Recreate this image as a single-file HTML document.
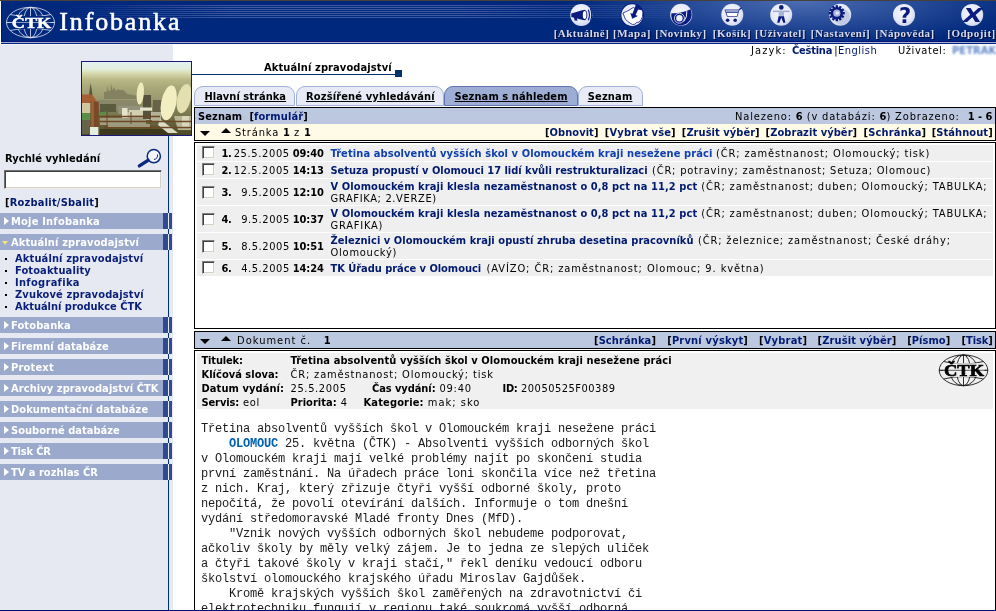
<!DOCTYPE html>
<html lang="cs">
<head>
<meta charset="utf-8">
<title>Infobanka ČTK</title>
<style>
html,body{margin:0;padding:0;}
body{width:996px;height:611px;overflow:hidden;position:relative;background:#fff;
 font-family:"DejaVu Sans Condensed","DejaVu Sans","Liberation Sans",sans-serif;font-size:11px;color:#000;}
.abs{position:absolute;}
.t{position:absolute;white-space:pre;line-height:13px;height:13px;font-size:11px;letter-spacing:calc(.92px + var(--d,0px));}
.b{font-weight:bold;letter-spacing:calc(.08px + var(--d,0px));}
b{font-weight:bold;letter-spacing:calc(.08px + var(--d,0px));}
.nv{color:#001a70;}
#topline{left:0;top:0;width:996px;height:1px;background:#46423a;}
#hdr{left:1px;top:1px;width:995px;height:41px;background:#00287c;overflow:hidden;}
#hdr .l1{position:absolute;left:0;top:40px;width:995px;height:1px;background:#00157a;}
#hb2{left:1px;top:42px;width:995px;height:1px;background:#a5b2d5;}
#hb3{left:1px;top:43px;width:995px;height:1px;background:#00207c;}
#side{left:0;top:44px;width:173px;height:566px;background:#e6e9f2;}
#sidetop{left:0;top:44px;width:173px;height:1px;background:#f5f6fa;}
#botline{left:0;top:610px;width:996px;height:1px;background:#00126e;}
#vline{left:168px;top:135px;width:1px;height:475px;background:#003070;}
#hline{left:192px;top:74px;width:204px;height:1px;background:#003070;}
#sq{left:395px;top:70px;width:7px;height:7px;background:#003366;}
.mi{position:absolute;left:0;width:173px;height:16px;}
.mi .m1{position:absolute;left:0;top:0;width:163px;height:16px;background:#9ba9cc;}
.mi .m5{position:absolute;left:4px;top:4px;width:0;height:0;border-left:5px solid #fff;border-top:4px solid transparent;border-bottom:4px solid transparent;}
.mi .m5.dn{left:2px;top:7px;border-top:4px solid #f3e27a;border-left:3.5px solid transparent;border-right:3.5px solid transparent;border-bottom:none;}
.mi .m2{position:absolute;left:163px;top:0;width:5px;height:16px;background:#2e4b94;}
.mi .m4{position:absolute;left:169px;top:0;width:3px;height:16px;background:#2e4b94;}
.mi .m3{position:absolute;left:168px;top:0;width:1px;height:16px;background:#e6e9f2;}
.w{color:#fff;}
.sub{color:#0a1f7a;}
.bul{position:absolute;left:5px;width:2px;height:2px;background:#000;}
.box{position:absolute;left:194px;width:800px;border:1px solid #000;background:#fff;}
.row{position:absolute;left:197px;width:796px;background:#efefef;}
.cb{position:absolute;left:202px;width:11px;height:11px;background:#fff;border:1px solid;border-color:#808080 #f4f2ec #f4f2ec #808080;box-shadow:inset 1px 1px 0 #404040,inset -1px -1px 0 #d4d0c8;}
.mono{position:absolute;left:201px;white-space:pre;font-family:"Liberation Mono","DejaVu Sans Mono",monospace;font-size:12px;line-height:15px;height:15px;letter-spacing:-.2px;color:#1a1a1a;}
.tab{position:absolute;top:86px;height:20px;box-sizing:border-box;border:1px solid #a3b2d8;border-radius:9px 9px 0 0;background:#e8ebf6;}
.tab.act{background:#9eadd4;border-color:#5f76b2;}
.u{text-decoration:underline;}
.hl{position:absolute;white-space:pre;font-family:"Liberation Serif",serif;font-weight:bold;font-size:11px;line-height:14px;color:#d6dae9;text-shadow:1px 1px 0 #000a3c;top:25px;letter-spacing:.5px;width:80px;text-align:center;}
.tri-d{position:absolute;width:0;height:0;border-top:5px solid #000;border-left:5px solid transparent;border-right:5px solid transparent;}
.tri-u{position:absolute;width:0;height:0;border-bottom:5px solid #000;border-left:5px solid transparent;border-right:5px solid transparent;}
</style>
</head>
<body>
<div id="pg" style="position:absolute;left:0;top:0;width:996px;height:611px;overflow:hidden;will-change:transform;">
<div class="abs" id="topline"></div>
<div class="abs" id="hdr">
<div class="abs" style="left:0;top:0;width:1px;height:41px;background:#001a80;"></div>
<div class="abs" style="left:60px;top:4px;width:935px;height:14px;background:repeating-linear-gradient(to bottom,#3c5aa2 0,#3c5aa2 1px,transparent 1px,transparent 2px);-webkit-mask-image:linear-gradient(to right,transparent 0,#000 170px,#000 400px,transparent 640px);mask-image:linear-gradient(to right,transparent 0,#000 170px,#000 400px,transparent 640px);"></div>
<div class="abs" style="left:0;top:0;width:995px;height:40px;background:radial-gradient(ellipse 230px 46px at 800px 0,rgba(96,126,192,.8),rgba(96,126,192,0) 100%);"></div>
<div class="l1"></div>
<svg class="abs" style="left:4px;top:5px" width="52" height="34" viewBox="0 0 52 34">
<g fill="none" stroke="#dfe5f3" stroke-width="0.8">
<ellipse cx="25.5" cy="16.5" rx="24" ry="15.2"/>
<ellipse cx="25.5" cy="16.5" rx="7" ry="15.2"/>
<ellipse cx="25.5" cy="16.5" rx="14" ry="15.2"/>
<path d="M25.5 1.3V31.7M1.5 16.5H49.5M5 8.5Q25.5 13 46 8.5M5 24.5Q25.5 20 46 24.5"/>
</g>
<rect x="6.5" y="10" width="39" height="13" fill="#00287c"/>
<path d="M1.5 16.5H49.5" stroke="#dfe5f3" stroke-width="0.6"/>
<text x="6.7" y="22" textLength="39.6" lengthAdjust="spacingAndGlyphs" font-family="Liberation Serif,serif" font-weight="bold" font-size="15.5" fill="#fff" stroke="#fff" stroke-width="0.45">ČTK</text>
</svg>
<div class="abs" id="ibk" style="left:58.3px;top:6px;font-family:'Liberation Serif',serif;font-size:26px;line-height:30px;color:#fff;letter-spacing:1.85px;white-space:pre;-webkit-text-stroke:0.55px #fff;">Infobanka</div>
<div class="hl" id="lb0" style="left:540.5px;">[Aktuálně]</div>
<div class="hl" id="lb1" style="left:591px;">[Mapa]</div>
<div class="hl" id="lb2" style="left:640px;">[Novinky]</div>
<div class="hl" id="lb3" style="left:691px;">[Košík]</div>
<div class="hl" id="lb4" style="left:739.5px;">[Uživatel]</div>
<div class="hl" id="lb5" style="left:799.5px;">[Nastavení]</div>
<div class="hl" id="lb6" style="left:864px;">[Nápověda]</div>
<div class="hl" id="lb7" style="left:930.5px;">[Odpojit]</div>
</div>
<svg class="abs" style="left:560px;top:0" width="436" height="30" viewBox="560 0 436 30">
<defs><radialGradient id="cg" cx="45%" cy="40%" r="60%"><stop offset="0" stop-color="#f6f7fd"/><stop offset="0.7" stop-color="#e6e9f7"/><stop offset="1" stop-color="#cfd6ec"/></radialGradient></defs>
<g fill="url(#cg)">
<circle cx="581.3" cy="15" r="11"/><circle cx="681.2" cy="14.7" r="11"/><circle cx="732.3" cy="14.7" r="11"/>
<circle cx="781.2" cy="14.7" r="11"/><circle cx="840.2" cy="14.7" r="11"/><circle cx="904" cy="14.9" r="11"/><circle cx="972.2" cy="14.9" r="11"/>
</g>
<!-- megaphone -->
<g fill="#0b1c80">
<path d="M571.3 13.6L582 10.2Q584.6 10 584.6 15Q584.6 20 582 19.8L576.8 18.6L577.6 20.8L574.6 20.4L574 17.8L571.3 17Z"/>
<ellipse cx="584.2" cy="15" rx="3.1" ry="5.3"/>
</g>
<ellipse cx="584.6" cy="15" rx="1.8" ry="4" fill="#fff"/>
<path d="M588.3 9.8Q590.6 15 588.3 20.2M590.4 8.4Q593 15 590.4 21.6" fill="none" stroke="#0b1c80" stroke-width="1.1"/>
<!-- map -->
<circle cx="632.2" cy="15.1" r="11.8" fill="#0b1c80"/><circle cx="632.2" cy="15.1" r="10.8" fill="#e8ebf8"/>
<path d="M622.9 13L626.8 11.3L630 9.6L632.2 8.1L633.7 7.6L636 9L639.1 9.3L642 9.8L642.8 12.3L642.5 16.7L641.1 19.6L639.1 22.1L636.7 22.3L635.2 24.1L632.7 24.5L630.8 23.6L627.8 21.6L625.4 19.1L624.4 16.7Z" fill="#fff" stroke="#0b1c80" stroke-width="0.8"/>
<path d="M635 4.6Q640 5.4 642.4 10L639.2 9.6L637 7Z" fill="#0b1c80"/>
<path d="M636 4.4L640 5.6L635.6 14.9L637.9 16L632.2 18.7L630.3 13L632.4 13.8Z" fill="#0b1c80"/>
<!-- horn -->
<path d="M671.4 13.2Q676 13.6 680.5 12.6Q686 11.4 690.6 9.2Q692.8 15 690.4 19.6Q687 25 681 25.4Q674.5 25 672 19.4Q670.8 16.4 671.4 13.2Z" fill="#0b1c80"/>
<circle cx="679.4" cy="18.2" r="5" fill="none" stroke="#f4f5fc" stroke-width="0.8"/><circle cx="679.4" cy="18.2" r="3.2" fill="#eceefa"/>
<path d="M683.6 21.6Q687.6 17 686.8 11.2" fill="none" stroke="#f4f5fc" stroke-width="1"/>
<!-- cart -->
<path d="M724.4 9.4H739.6L737.4 16.8H727Z" fill="#2a3a94"/>
<path d="M725.4 10.1H738.6L738 12.2H726Z" fill="#96a2cf"/>
<path d="M726.6 13H737.8L736.8 16H727.6Z" fill="#fff"/>
<path d="M739.2 9.8L741.6 7.8" stroke="#0b1c80" stroke-width="1.2"/>
<circle cx="727.6" cy="20.2" r="1.8" fill="#0b1c80"/><circle cx="735.2" cy="20.2" r="1.8" fill="#0b1c80"/>
<!-- user -->
<circle cx="781.3" cy="7.4" r="2.3" fill="#0b1c80"/>
<rect x="773" y="10.6" width="16.4" height="1.5" fill="#9eabd4"/>
<rect x="778.6" y="11.4" width="5.4" height="5" fill="#aab5da"/>
<path d="M778.6 16.2H784L785.4 22.8H783.2L781.3 17.6L779.4 22.8H777.2Z" fill="#0b1c80"/>
<!-- gear -->
<circle cx="842" cy="16.8" r="8" fill="#c3cae3"/>
<g transform="translate(836.8 13.2)" fill="#0b1c80"><circle r="6.2"/>
<g id="tth"><rect x="-1.2" y="-8" width="2.4" height="16"/></g>
<use href="#tth" transform="rotate(30)"/><use href="#tth" transform="rotate(60)"/><use href="#tth" transform="rotate(90)"/><use href="#tth" transform="rotate(120)"/><use href="#tth" transform="rotate(150)"/>
<circle r="3.6" fill="#a9b3d8"/><circle cx="0.4" cy="-0.2" r="1.6" fill="#e8ebf7"/></g>
<!-- help / exit -->
<text x="905" y="22.8" text-anchor="middle" font-family="DejaVu Sans,Liberation Sans,sans-serif" font-weight="bold" font-size="21" fill="#0b1c80">?</text>
<text transform="translate(972.8 21.8) scale(1.28 1)" x="0" y="0" text-anchor="middle" font-family="DejaVu Sans,Liberation Sans,sans-serif" font-weight="bold" font-style="italic" font-size="19.5" fill="#0b1c80">X</text>
</svg>

<div class="abs" id="hb2"></div><div class="abs" id="hb3"></div>
<div class="abs" id="side"></div><div class="abs" id="sidetop"></div>
<div class="abs" id="vline"></div><div class="abs" id="hline"></div><div class="abs" id="sq"></div>
<div class="t " id="jaz" style="left:751px;top:44px;--d:0.197px;">Jazyk:</div>
<div class="t b nv" id="jaz2" style="left:792px;top:44px;--d:-0.313px;">Čeština</div>
<div class="t " id="jaz3" style="left:834.2px;top:44px;--d:-0.418px;">|<span class="nv">English</span></div>
<div class="t " id="uziv" style="left:898px;top:44px;--d:-0.349px;">Uživatel:</div>
<div class="t b" id="uname" style="left:952px;top:44px;color:#5f86c8;filter:blur(1px);">PETRAK</div>
<div class="abs" id="photo" style="left:81px;top:61px;width:109px;height:73px;border:1px solid #1a1a7a;background:#8a8a60;overflow:hidden;"><svg style="position:absolute;left:0;top:0" width="109" height="73" viewBox="82 62 109 73">
<defs>
<linearGradient id="sky" x1="0" y1="0" x2="0" y2="1">
<stop offset="0" stop-color="#e2f2f2"/><stop offset="0.1" stop-color="#e2eedc"/><stop offset="0.16" stop-color="#d6d8aa"/><stop offset="0.24" stop-color="#bab886"/><stop offset="0.36" stop-color="#a6a678"/><stop offset="0.5" stop-color="#9a9a6e"/><stop offset="0.62" stop-color="#86865a"/><stop offset="0.8" stop-color="#6c6a42"/><stop offset="1" stop-color="#4c4826"/>
</linearGradient>
<filter id="bl" x="-5%" y="-5%" width="110%" height="110%"><feGaussianBlur stdDeviation="0.55"/></filter>
</defs>
<rect x="82" y="62" width="109" height="73" fill="url(#sky)"/>
<g filter="url(#bl)">
<!-- castle -->
<path d="M104 95L104 92L107 91.5L107.6 85L108.6 91L110.4 91L111 83L112.4 90.5L114 87L115.4 90.8L118 89.5L124 90.5L127 94L138 96L138 99L104 99Z" fill="#828260"/>
<!-- left spire -->
<path d="M90.6 83L91.8 90.5L92.4 95H89L89.6 90.5Z" fill="#55553c"/>
<!-- mid buildings -->
<rect x="98" y="100" width="40" height="10" fill="#8a886a"/>
<rect x="100" y="104" width="16" height="8" fill="#5a5c3c"/>
<rect x="118" y="106" width="26" height="8" fill="#94927a"/>
<rect x="122" y="112" width="34" height="8" fill="#bdbb9e"/>
<rect x="122" y="108" width="5.5" height="11" fill="#e6e4c8"/>
<rect x="129" y="110" width="14" height="5" fill="#d2d0b2"/>
<rect x="100" y="118" width="46" height="7" fill="#a09e80"/>
<rect x="143" y="95" width="8" height="24" fill="#55533c"/>
<rect x="140" y="107.5" width="12" height="3.2" fill="#e6e6ce"/>
<rect x="153" y="100" width="9" height="12" fill="#66644a"/>
<rect x="152" y="112" width="9" height="10" fill="#b4b296"/>
<!-- red roof -->
<path d="M82 94.4H92L98 103H82Z" fill="#a55f36"/>
<rect x="82" y="103" width="8.6" height="10" fill="#cdc69e"/>
<path d="M82 113H91V120H82ZM97 113L106 111.6L108 114.4L98 117Z" fill="#5c8c48"/>
<rect x="82" y="120" width="9" height="14" fill="#66644a"/>
<!-- chimney -->
<rect x="90.4" y="101.6" width="8.4" height="25.4" fill="#7b4a28"/>
<rect x="91.2" y="101.6" width="2.6" height="25.4" fill="#99643c"/>
<rect x="90" y="127" width="8.4" height="8" fill="#e4eee0"/>
<!-- dish supports -->
<path d="M160 119L178 133H168L158 125Z" fill="#dddcc4"/>
<path d="M174 116H191V130H178Z" fill="#b7b598"/>
<rect x="182" y="116" width="7" height="11" fill="#d9d7ba"/>
<!-- dishes -->
<ellipse cx="140.3" cy="93.4" rx="3.6" ry="11.1" fill="#eeeabc" transform="rotate(5 140.3 93.4)"/>
<ellipse cx="184" cy="98.6" rx="6.7" ry="15" fill="#e3dfae" transform="rotate(13 184 98.6)"/>
<ellipse cx="168.7" cy="102.9" rx="7.6" ry="17.6" fill="#f2eec2" transform="rotate(11 168.7 102.9)"/>
<!-- rails -->
<path d="M98 116.5H160M100 121.5H191M104 127.5H191" stroke="#6e4628" stroke-width="1.3" fill="none"/>
<path d="M107 112V134M131 112V128M150 114V130" stroke="#6e4628" stroke-width="1" fill="none"/>
<path d="M100 129H162L170 135H100Z" fill="#3c381e"/>
<path d="M108 124H150V127H108Z" fill="#9c9a7c"/>
</g>
</svg>
</div>
<div class="t b" id="ttl" style="left:264px;top:61px;--d:0.036px;">Aktuální zpravodajství</div>
<div class="t b" id="rv" style="left:5px;top:152px;--d:-0.017px;">Rychlé vyhledání</div>
<svg class="abs" style="left:136px;top:146px" width="30" height="24" viewBox="0 0 30 24"><circle cx="17.8" cy="10.2" r="6.6" fill="#f4f6fb" stroke="#0a2a80" stroke-width="1.5"/><path d="M12 14.4L3.4 19.9" stroke="#0a2a80" stroke-width="3.5" stroke-linecap="round"/><path d="M21.5 8.5A4 4 0 0 1 18 13.5" fill="none" stroke="#0a2a80" stroke-width="1"/></svg>
<div class="abs" id="inp" style="left:4px;top:170px;width:156px;height:17px;background:#fff;border:1px solid;border-color:#707070 #f0eee8 #f0eee8 #707070;box-shadow:inset 1px 1px 0 #404040,inset -1px -1px 0 #d4d0c8;"></div>
<div class="t b" id="rs" style="left:5px;top:196px;--d:0.124px;">[<span class="nv">Rozbalit/Sbalit</span>]</div>
<div class="mi" style="top:213px"><span class="m1"></span><span class="m2"></span><span class="m3"></span><span class="m4"></span><span class="m5"></span></div>
<div class="t b w" id="mi0" style="left:11px;top:215px;--d:0.127px;">Moje Infobanka</div>
<div class="mi" style="top:234px"><span class="m1"></span><span class="m2"></span><span class="m3"></span><span class="m4"></span><span class="m5 dn"></span></div>
<div class="t b w" id="mi1" style="left:11px;top:236px;--d:0.050px;">Aktuální zpravodajství</div>
<div class="mi" style="top:317px"><span class="m1"></span><span class="m2"></span><span class="m3"></span><span class="m4"></span><span class="m5"></span></div>
<div class="t b w" id="mi2" style="left:11px;top:319px;--d:0.040px;">Fotobanka</div>
<div class="mi" style="top:338px"><span class="m1"></span><span class="m2"></span><span class="m3"></span><span class="m4"></span><span class="m5"></span></div>
<div class="t b w" id="mi3" style="left:11px;top:340px;--d:-0.052px;">Firemní databáze</div>
<div class="mi" style="top:359px"><span class="m1"></span><span class="m2"></span><span class="m3"></span><span class="m4"></span><span class="m5"></span></div>
<div class="t b w" id="mi4" style="left:11px;top:361px;--d:0.107px;">Protext</div>
<div class="mi" style="top:380px"><span class="m1"></span><span class="m2"></span><span class="m3"></span><span class="m4"></span><span class="m5"></span></div>
<div class="t b w" id="mi5" style="left:11px;top:382px;--d:0.000px;">Archivy zpravodajství ČTK</div>
<div class="mi" style="top:401px"><span class="m1"></span><span class="m2"></span><span class="m3"></span><span class="m4"></span><span class="m5"></span></div>
<div class="t b w" id="mi6" style="left:11px;top:403px;--d:0.012px;">Dokumentační databáze</div>
<div class="mi" style="top:422px"><span class="m1"></span><span class="m2"></span><span class="m3"></span><span class="m4"></span><span class="m5"></span></div>
<div class="t b w" id="mi7" style="left:11px;top:424px;--d:-0.053px;">Souborné databáze</div>
<div class="mi" style="top:443px"><span class="m1"></span><span class="m2"></span><span class="m3"></span><span class="m4"></span><span class="m5"></span></div>
<div class="t b w" id="mi8" style="left:11px;top:445px;--d:-0.244px;">Tisk ČR</div>
<div class="mi" style="top:464px"><span class="m1"></span><span class="m2"></span><span class="m3"></span><span class="m4"></span><span class="m5"></span></div>
<div class="t b w" id="mi9" style="left:11px;top:466px;--d:-0.077px;">TV a rozhlas ČR</div>
<div class="bul" style="top:258px"></div>
<div class="t b sub" id="sub0" style="left:15px;top:252px;--d:0.060px;">Aktuální zpravodajství</div>
<div class="bul" style="top:270px"></div>
<div class="t b sub" id="sub1" style="left:15px;top:264px;--d:0.033px;">Fotoaktuality</div>
<div class="bul" style="top:282px"></div>
<div class="t b sub" id="sub2" style="left:15px;top:276px;--d:0.227px;">Infografika</div>
<div class="bul" style="top:294px"></div>
<div class="t b sub" id="sub3" style="left:15px;top:288px;--d:0.071px;">Zvukové zpravodajství</div>
<div class="bul" style="top:306px"></div>
<div class="t b sub" id="sub4" style="left:15px;top:300px;--d:-0.097px;">Aktuální produkce ČTK</div>
<div class="tab" style="left:194px;width:101px;"></div>
<div class="t b u" id="tab0" style="left:204.4px;top:90px;--d:-0.042px;">Hlavní stránka</div>
<div class="tab" style="left:296px;width:148px;"></div>
<div class="t b u" id="tab1" style="left:306px;top:90px;--d:0.071px;">Rozšířené vyhledávání</div>
<div class="tab act" style="left:444px;width:134px;"></div>
<div class="t b u" id="tab2" style="left:454.6px;top:90px;--d:0.014px;">Seznam s náhledem</div>
<div class="tab" style="left:578px;width:65px;"></div>
<div class="t b u" id="tab3" style="left:587.7px;top:90px;--d:0.097px;">Seznam</div>
<div class="box" style="top:107px;height:32px;"><div class="abs" style="left:0;top:0;width:800px;height:16px;background:#bcc7e0"></div><div class="abs" style="left:0;top:16px;width:800px;height:16px;background:#fffbe6"></div></div>
<div class="t b" id="sez" style="left:198px;top:110px;--d:0.027px;">Seznam  [<span class="nv">formulář</span>]</div>
<div class="t " id="nal" style="left:735px;top:110px;--d:-0.079px;">Nalezeno: <b>6</b> (v databázi: <b>6</b>) Zobrazeno:  <b>1 - 6</b></div>
<div class="tri-d" style="left:200px;top:131px"></div><div class="tri-u" style="left:221px;top:128px"></div>
<div class="t " id="str" style="left:235px;top:126px;--d:-0.082px;">Stránka <b>1</b> z <b>1</b></div>
<div class="t b" id="ac0" style="left:545px;top:126px;--d:-0.024px;">[<span class="nv">Obnovit</span>]</div>
<div class="t b" id="ac1" style="left:604.8px;top:126px;--d:0.083px;">[<span class="nv">Vybrat vše</span>]</div>
<div class="t b" id="ac2" style="left:681.8px;top:126px;--d:-0.031px;">[<span class="nv">Zrušit výběr</span>]</div>
<div class="t b" id="ac3" style="left:765.6px;top:126px;--d:-0.017px;">[<span class="nv">Zobrazit výběr</span>]</div>
<div class="t b" id="ac4" style="left:863.5px;top:126px;--d:0.103px;">[<span class="nv">Schránka</span>]</div>
<div class="t b" id="ac5" style="left:931.7px;top:126px;--d:0.004px;">[<span class="nv">Stáhnout</span>]</div>
<div class="box" style="top:142px;height:185px;"></div>
<div class="row" style="top:145px;height:16px"></div>
<div class="cb" style="top:146px"></div>
<div class="t b" id="n0" style="left:221.5px;top:147px;--d:-0.406px;">1.</div>
<div class="t " id="d0" style="left:233.7px;top:147px;--d:-0.282px;">25.5.2005</div>
<div class="t b" id="tm0" style="left:292.8px;top:147px;--d:-0.181px;">09:40</div>
<div class="t b nv" id="r0" style="left:330.5px;top:147px;--d:0.018px;color:#1040b0;">Třetina absolventů vyšších škol v Olomouckém kraji nesežene práci</div>
<div class="t " id="k0" style="left:716px;top:147px;--d:-0.039px;">(ČR; zaměstnanost; Olomoucký; tisk)</div>
<div class="row" style="top:162px;height:16px"></div>
<div class="cb" style="top:163px"></div>
<div class="t b" id="n1" style="left:221.5px;top:164px;--d:-0.406px;">2.</div>
<div class="t " id="d1" style="left:233.7px;top:164px;--d:-0.282px;">12.5.2005</div>
<div class="t b" id="tm1" style="left:292.8px;top:164px;--d:-0.181px;">14:13</div>
<div class="t b nv" id="r1" style="left:330.5px;top:164px;--d:-0.095px;">Setuza propustí v Olomouci 17 lidí kvůli restrukturalizaci</div>
<div class="t " id="k1" style="left:652px;top:164px;--d:-0.114px;">(ČR; potraviny; zaměstnanost; Setuza; Olomouc)</div>
<div class="row" style="top:179px;height:26px"></div>
<div class="cb" style="top:186px"></div>
<div class="t b" id="n2" style="left:221.5px;top:186px;--d:-0.406px;">3.</div>
<div class="t " id="d2" style="left:241.2px;top:186px;--d:-0.352px;">9.5.2005</div>
<div class="t b" id="tm2" style="left:292.8px;top:186px;--d:-0.181px;">12:10</div>
<div class="t b nv" id="r2" style="left:330.5px;top:180px;--d:0.005px;">V Olomouckém kraji klesla nezaměstnanost o 0,8 pct na 11,2 pct</div>
<div class="t " id="k2" style="left:701.2px;top:180px;--d:-0.059px;">(ČR; zaměstnanost; duben; Olomoucký; TABULKA;</div>
<div class="t " id="r2b" style="left:330.5px;top:192px;--d:-0.269px;">GRAFIKA; 2.VERZE)</div>
<div class="row" style="top:206px;height:26px"></div>
<div class="cb" style="top:213px"></div>
<div class="t b" id="n3" style="left:221.5px;top:213px;--d:-0.406px;">4.</div>
<div class="t " id="d3" style="left:241.2px;top:213px;--d:-0.352px;">9.5.2005</div>
<div class="t b" id="tm3" style="left:292.8px;top:213px;--d:-0.181px;">10:37</div>
<div class="t b nv" id="r3" style="left:330.5px;top:207px;--d:0.005px;">V Olomouckém kraji klesla nezaměstnanost o 0,8 pct na 11,2 pct</div>
<div class="t " id="k3" style="left:701.2px;top:207px;--d:-0.059px;">(ČR; zaměstnanost; duben; Olomoucký; TABULKA;</div>
<div class="t " id="r3b" style="left:330.5px;top:219px;--d:-0.134px;">GRAFIKA)</div>
<div class="row" style="top:233px;height:26px"></div>
<div class="cb" style="top:240px"></div>
<div class="t b" id="n4" style="left:221.5px;top:240px;--d:-0.406px;">5.</div>
<div class="t " id="d4" style="left:241.2px;top:240px;--d:-0.352px;">8.5.2005</div>
<div class="t b" id="tm4" style="left:292.8px;top:240px;--d:-0.181px;">10:51</div>
<div class="t b nv" id="r4" style="left:330.5px;top:234px;--d:-0.036px;">Železnici v Olomouckém kraji opustí zhruba desetina pracovníků</div>
<div class="t " id="k4" style="left:698px;top:234px;--d:-0.074px;">(ČR; železnice; zaměstnanost; České dráhy;</div>
<div class="t " id="r4b" style="left:330.5px;top:246px;--d:-0.156px;">Olomoucký)</div>
<div class="row" style="top:260px;height:16px"></div>
<div class="cb" style="top:261px"></div>
<div class="t b" id="n5" style="left:221.5px;top:262px;--d:-0.406px;">6.</div>
<div class="t " id="d5" style="left:241.2px;top:262px;--d:-0.352px;">4.5.2005</div>
<div class="t b" id="tm5" style="left:292.8px;top:262px;--d:-0.181px;">14:24</div>
<div class="t b nv" id="r5" style="left:330.5px;top:262px;--d:-0.121px;">TK Úřadu práce v Olomouci</div>
<div class="t " id="k5" style="left:486.6px;top:262px;--d:-0.029px;">(AVÍZO; ČR; zaměstnanost; Olomouc; 9. května)</div>
<div class="box" style="top:331px;height:16px;background:#bcc7e0"></div>
<div class="tri-d" style="left:200px;top:339px"></div><div class="tri-u" style="left:221px;top:336px"></div>
<div class="t " id="dok" style="left:237px;top:334px;--d:0.104px;">Dokument č.   <b>1</b></div>
<div class="t b" id="da0" style="left:594px;top:334px;--d:0.025px;">[<span class="nv">Schránka</span>]</div>
<div class="t b" id="da1" style="left:667.2px;top:334px;--d:0.121px;">[<span class="nv">První výskyt</span>]</div>
<div class="t b" id="da2" style="left:758.9px;top:334px;--d:0.149px;">[<span class="nv">Vybrat</span>]</div>
<div class="t b" id="da3" style="left:817.6px;top:334px;--d:0.034px;">[<span class="nv">Zrušit výběr</span>]</div>
<div class="t b" id="da4" style="left:907.2px;top:334px;--d:-0.038px;">[<span class="nv">Písmo</span>]</div>
<div class="t b" id="da5" style="left:961.6px;top:334px;--d:-0.161px;">[<span class="nv">Tisk</span>]</div>
<div class="box" style="top:350px;height:270px;"></div>
<div class="abs" style="left:197px;top:353px;width:796px;height:56px;background:#f0f0f0"></div>
<div class="t " id="m0" style="left:201.5px;top:354px;--d:-0.239px;"><b>Titulek:</b></div>
<div class="t " id="m1" style="left:290.5px;top:354px;--d:0.009px;"><b>Třetina absolventů vyšších škol v Olomouckém kraji nesežene práci</b></div>
<div class="t " id="m2" style="left:201.5px;top:368px;--d:-0.063px;"><b>Klíčová slova:</b></div>
<div class="t " id="m3" style="left:290.5px;top:368px;--d:-0.082px;">ČR; zaměstnanost; Olomoucký; tisk</div>
<div class="t " id="m4" style="left:201.5px;top:382px;--d:0.006px;"><b>Datum vydání:</b></div>
<div class="t " id="m5" style="left:290.5px;top:382px;--d:-0.282px;">25.5.2005</div>
<div class="t " id="m6" style="left:372px;top:382px;--d:-0.153px;"><b>Čas vydání:</b> 09:40</div>
<div class="t " id="m7" style="left:502.6px;top:382px;--d:-0.428px;"><b>ID:</b> 20050525F00389</div>
<div class="t " id="m8" style="left:201.5px;top:396px;--d:-0.192px;"><b>Servis:</b> eol</div>
<div class="t " id="m9" style="left:290.5px;top:396px;--d:-0.061px;"><b>Priorita:</b> 4</div>
<div class="t " id="m10" style="left:363.5px;top:396px;--d:0.077px;"><b>Kategorie:</b> mak; sko</div>
<svg class="abs" style="left:937.7px;top:354px" width="52" height="34" viewBox="0 0 52 34">
<g fill="none" stroke="#1a1a1a" stroke-width="0.9">
<ellipse cx="25.5" cy="16.3" rx="24.3" ry="15.4"/>
<ellipse cx="25.5" cy="16.3" rx="7" ry="15.4"/>
<ellipse cx="25.5" cy="16.3" rx="14" ry="15.4"/>
<path d="M25.5 0.9V31.7M1.2 16.3H49.8M5.5 7.5Q25.5 12.5 45.5 7.5M5.5 25Q25.5 20 45.5 25"/>
</g>
<rect x="5.5" y="9.3" width="41" height="13.6" fill="#f0f0f0"/>
<path d="M1.2 16.3H49.8" stroke="#1a1a1a" stroke-width="0.7"/>
<text x="6" y="22" textLength="40" lengthAdjust="spacingAndGlyphs" font-family="Liberation Serif,serif" font-weight="bold" font-size="17.5" fill="#000" stroke="#000" stroke-width="0.7">ČTK</text>
</svg>
<div class="mono" id="bd0" style="top:422px">Třetina absolventů vyšších škol v Olomouckém kraji nesežene práci</div>
<div class="mono" id="bd1" style="top:437px">    <b style="color:#0060ae;letter-spacing:-.2px">OLOMOUC</b> 25. května (ČTK) - Absolventi vyšších odborných škol</div>
<div class="mono" id="bd2" style="top:452px">v Olomouckém kraji mají velké problémy najít po skončení studia</div>
<div class="mono" id="bd3" style="top:467px">první zaměstnání. Na úřadech práce loni skončila více než třetina</div>
<div class="mono" id="bd4" style="top:482px">z nich. Kraj, který zřizuje čtyři vyšší odborné školy, proto</div>
<div class="mono" id="bd5" style="top:497px">nepočítá, že povolí otevírání dalších. Informuje o tom dnešní</div>
<div class="mono" id="bd6" style="top:512px">vydání středomoravské Mladé fronty Dnes (MfD).</div>
<div class="mono" id="bd7" style="top:527px">    "Vznik nových vyšších odborných škol nebudeme podporovat,</div>
<div class="mono" id="bd8" style="top:542px">ačkoliv školy by měly velký zájem. Je to jedna ze slepých uliček</div>
<div class="mono" id="bd9" style="top:557px">a čtyři takové školy v kraji stačí," řekl deníku vedoucí odboru</div>
<div class="mono" id="bd10" style="top:572px">školství olomouckého krajského úřadu Miroslav Gajdůšek.</div>
<div class="mono" id="bd11" style="top:587px">    Kromě krajských vyšších škol zaměřených na zdravotnictví či</div>
<div class="mono" id="bd12" style="top:602px">elektrotechniku fungují v regionu také soukromá vyšší odborná</div>
<div class="abs" id="botline"></div>
</div>
</body>
</html>
